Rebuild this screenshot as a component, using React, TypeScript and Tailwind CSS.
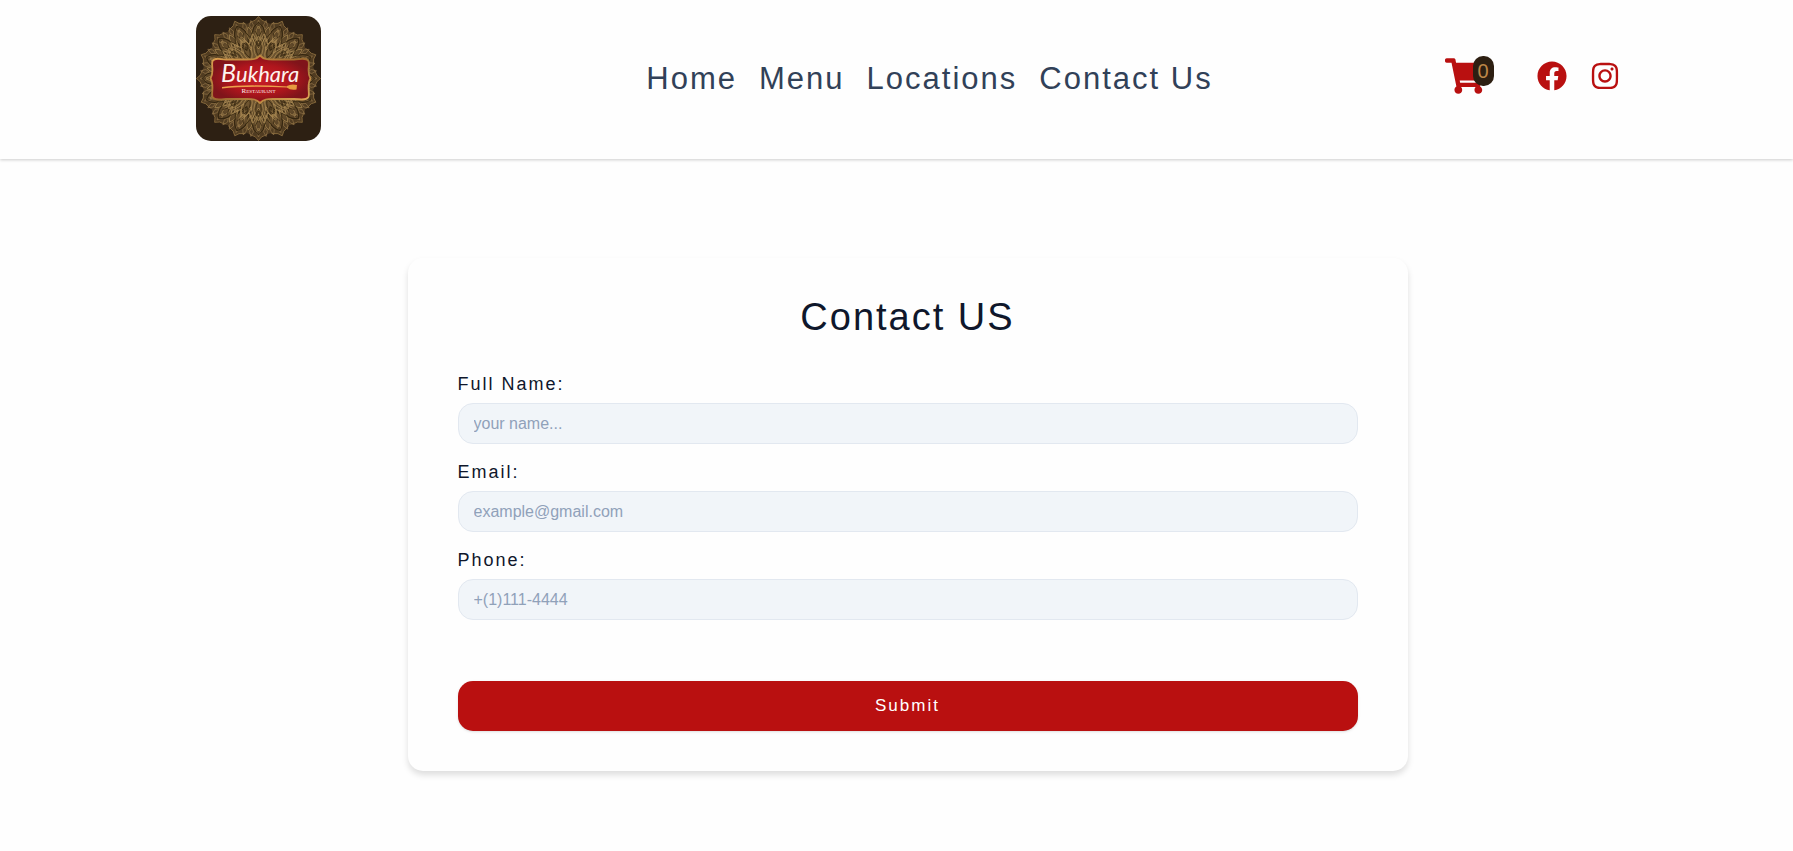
import type { ReactNode } from "react";
import { FaFacebook, FaInstagram, FaShoppingCart } from "react-icons/fa";

const ring = (count: number) => Array.from({ length: count }, (_, i) => (i * 360) / count);

interface PetalsProps {
  count: number;
  d: string;
  color: string;
  fill?: string;
  width?: number;
}

function Petals({ count, d, color, fill = "none", width = 0.8 }: PetalsProps) {
  return (
    <g fill={fill} stroke={color} strokeWidth={width}>
      {ring(count).map((angle) => (
        <path key={angle} d={d} transform={`rotate(${angle} 62.5 62.5)`} />
      ))}
    </g>
  );
}

const PLATE =
  "M64 39.500 C60 43.500 57 43.500 51 43.500 H30 C24 43.500 19 41 16.500 45 C15 50 18.500 56 14.500 62.500 C18.500 69 15 77 16.500 81 C19 85 24 83 30 83 H51 C57 83 60 83 64 87 C68 83 71 83 77 83 H98 C104 83 110 85 112.500 81 C114 77 110.500 69 114.500 62.500 C110.500 56 114 50 112.500 45 C110 41 104 43.500 98 43.500 H77 C71 43.500 68 43.500 64 39.500 Z";

function Logo() {
  return (
    <svg viewBox="0 0 125 125" className="size-[125px] rounded-[15px]" role="img" aria-label="Bukhara Restaurant">
      <defs>
        <radialGradient id="plate">
          <stop offset="0" stopColor="#c91f28" />
          <stop offset="0.6" stopColor="#b0161d" />
          <stop offset="1" stopColor="#80141a" />
        </radialGradient>
        <radialGradient id="disc">
          <stop offset="0" stopColor="#7b6037" />
          <stop offset="0.8" stopColor="#644c2b" />
          <stop offset="1" stopColor="#4e3a20" />
        </radialGradient>
        <linearGradient id="rim" x1="0" x2="1" y1="0" y2="1">
          <stop offset="0" stopColor="#e0a452" />
          <stop offset="0.5" stopColor="#9c6a30" />
          <stop offset="1" stopColor="#e5ad5a" />
        </linearGradient>
      </defs>
      <rect width="125" height="125" fill="#2d2013" />
      <Petals count={16} d="M62.500 0.500 Q60 5 55 6 Q51 8 50 14 H75 Q74 8 70 6 Q65 5 62.500 0.500 Z" color="#8f7040" fill="#523d22" />
      <circle cx="62.5" cy="62.5" r="56" fill="url(#disc)" />
      <Petals count={48} d="M62.500 4 L60.500 9 L62.500 13 L64.500 9 Z" color="#96774a" width={0.6} />
      <Petals count={16} d="M62.500 6 Q50 16 62.500 32 Q75 16 62.500 6" color="#33250f" width={1} />
      <Petals count={32} d="M62.500 10 Q57 17 62.500 25 Q68 17 62.500 10" color="#a5854f" width={0.7} />
      <Petals count={32} d="M59 15 L62.500 21 L66 15 M59.500 24 L62.500 30 L65.500 24" color="#33250f" width={0.7} />
      <Petals count={24} d="M56 22 L62.500 33 L69 22 M57 18 L62.500 27 L68 18" color="#b3925a" width={0.7} />
      <Petals count={16} d="M62.500 20 Q53 31 62.500 44 Q72 31 62.500 20" color="#a5854f" />
      <Petals count={16} d="M62.500 24 Q57 32 62.500 40 Q68 32 62.500 24" color="#382911" />
      <path d={PLATE} fill="url(#plate)" stroke="url(#rim)" strokeWidth="1.800" />
      <text x="25" y="66" fill="#fdf3ee" fontFamily="Lato, sans-serif" fontStyle="italic" fontSize="22">
        <tspan fontSize="25">B</tspan>ukhara
      </text>
      <path d="M26 71 Q48 68 92 70.500 V71.500 Q50 69.500 26 72.500 Z" fill="#eda14b" />
      <path d="M91 70 Q95 67.500 101 69 L100.500 73.500 Q94 74.500 91 71.500 Z" fill="#e79a3f" />
      <text x="45.500" y="76.500" fill="#fdf3ee" fontFamily="'Liberation Serif', serif" fontSize="7">
        R<tspan fontSize="5">ESTAURANT</tspan>
      </text>
    </svg>
  );
}

function NavLink({ children }: { children: ReactNode }) {
  return (
    <a href="#" className="text-[31px] leading-9 tracking-[2px] text-slate-700">
      {children}
    </a>
  );
}

function Field({ id, label, type, placeholder }: { id: string; label: string; type: string; placeholder: string }) {
  return (
    <div className="flex flex-col gap-[5px]">
      <label htmlFor={id} className="text-lg leading-7 tracking-[2px]">
        {label}
      </label>
      <input
        id={id}
        type={type}
        placeholder={placeholder}
        className="h-[41px] w-full rounded-[15px] border border-slate-200 bg-slate-100 px-[15px] text-base placeholder:text-slate-400"
      />
    </div>
  );
}

export default function App() {
  return (
    <div className="min-h-screen bg-[#fefefe] font-['Liberation_Sans',Arial,sans-serif] text-slate-900">
      <header className="pt-4 pb-[18px] pl-[22px] shadow-[0_1px_3px_rgba(0,0,0,0.2)]">
        <div className="mx-auto flex max-w-[1424px] items-center justify-between">
          <a href="#">
            <Logo />
          </a>
          <nav className="flex gap-[22px] pl-[94px]">
            <NavLink>Home</NavLink>
            <NavLink>Menu</NavLink>
            <NavLink>Locations</NavLink>
            <NavLink>Contact Us</NavLink>
          </nav>
          <div className="flex items-center gap-[23px] pb-1.5 text-[#b91010]">
            <a href="#" aria-label="Cart" className="relative mr-[29px] block">
              <FaShoppingCart className="size-10" />
              <span className="absolute top-0 left-7 flex h-[30px] w-[21px] items-center justify-center rounded-[10px] bg-[#2d1f12] text-xl text-[#bd8748]">
                0
              </span>
            </a>
            <a href="#" aria-label="Facebook">
              <FaFacebook className="size-[30px]" />
            </a>
            <a href="#" aria-label="Instagram">
              <FaInstagram className="size-[30px]" />
            </a>
          </div>
        </div>
      </header>
      <main className="pt-[99px] pb-20 pl-[22px]">
        <form className="mx-auto flex max-w-[1000px] flex-col rounded-[15px] px-[50px] py-10 shadow-[0_4px_6px_rgba(0,0,0,0.13)]">
          <h1 className="mb-[34px] text-center text-[38px] leading-[38px] tracking-[2px]">Contact US</h1>
          <div className="flex flex-col gap-3.5">
            <Field id="name" label="Full Name:" type="text" placeholder="your name..." />
            <Field id="email" label="Email:" type="email" placeholder="example@gmail.com" />
            <Field id="phone" label="Phone:" type="tel" placeholder="+(1)111-4444" />
          </div>
          <button
            type="button"
            className="mt-[61px] h-[50px] rounded-[15px] bg-[#b91010] text-[17px] tracking-[2px] text-white shadow-sm"
          >
            Submit
          </button>
        </form>
      </main>
    </div>
  );
}
